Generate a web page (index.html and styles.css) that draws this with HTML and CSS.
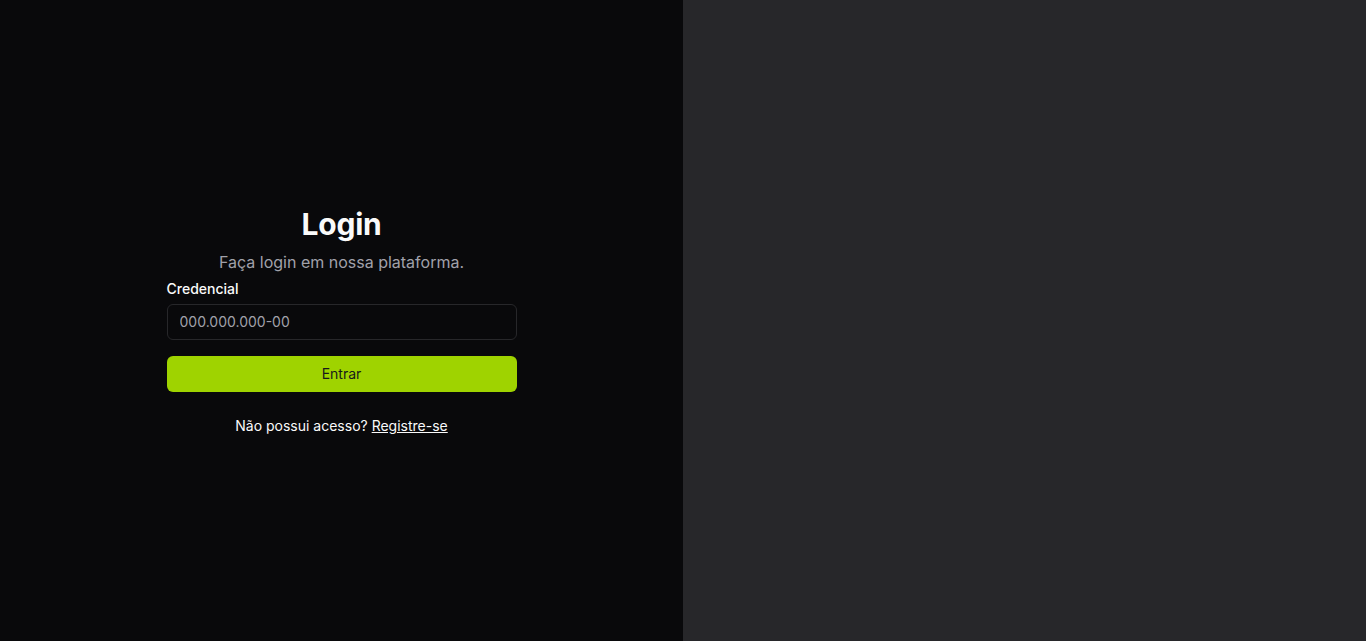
FILE: index.html
```html
<!DOCTYPE html>
<html lang="pt-BR">
<head>
<meta charset="utf-8">
<title>Login</title>
<link rel="stylesheet" href="styles.css">
</head>
<body>
<div class="page">
  <main class="left">
    <form class="form">
      <h1 class="title">Login</h1>
      <p class="subtitle">Faça login em nossa plataforma.</p>
      <label class="label" for="cred">Credencial</label>
      <input class="input" id="cred" type="text" placeholder="000.000.000-00">
      <button class="btn" type="button">Entrar</button>
      <p class="foot">Não possui acesso? <a href="#" class="link">Registre-se</a></p>
    </form>
  </main>
  <aside class="right"></aside>
</div>
</body>
</html>
```
FILE: styles.css
```css
* { box-sizing: border-box; }
html, body { margin: 0; padding: 0; height: 100%; }
body {
  font-family: Inter, "Noto Sans", sans-serif;
  background: #09090b;
  color: #fafafa;
}
.page {
  display: grid;
  grid-template-columns: 1fr 1fr;
  height: 641px;
}
.left {
  background: #09090b;
  display: flex;
  align-items: center;
  justify-content: center;
}
.right { background: #27272a; }
.form {
  width: 350px;
  display: flex;
  flex-direction: column;
}
.title {
  margin: 0;
  font-size: 30px;
  line-height: 36px;
  font-weight: 700;
  text-align: center;
  letter-spacing: -0.2px;
}
.subtitle {
  margin: 8px 0 0;
  font-size: 16px;
  line-height: 24px;
  color: #a1a1aa;
  text-align: center;
}
.label {
  margin-top: 8px;
  font-size: 14px;
  line-height: 14px;
  font-weight: 500;
  color: #fafafa;
}
.input {
  margin-top: 8px;
  height: 36px;
  width: 100%;
  border: 1px solid #27272a;
  border-radius: 6px;
  background: transparent;
  padding: 0 12px;
  font-family: inherit;
  font-size: 14px;
  color: #fafafa;
  outline: none;
}
.input::placeholder { color: #a1a1aa; }
.btn {
  margin-top: 16px;
  height: 36px;
  width: 100%;
  border: 0;
  border-radius: 6px;
  background: #9fd300;
  color: #18181b;
  font-family: inherit;
  font-size: 14px;
  font-weight: 400;
}
.foot {
  margin: 24px 0 0;
  font-size: 14px;
  line-height: 20px;
  text-align: center;
  font-weight: 400;
  color: #fafafa;
}
.link { color: #fafafa; text-decoration: underline; }
```
